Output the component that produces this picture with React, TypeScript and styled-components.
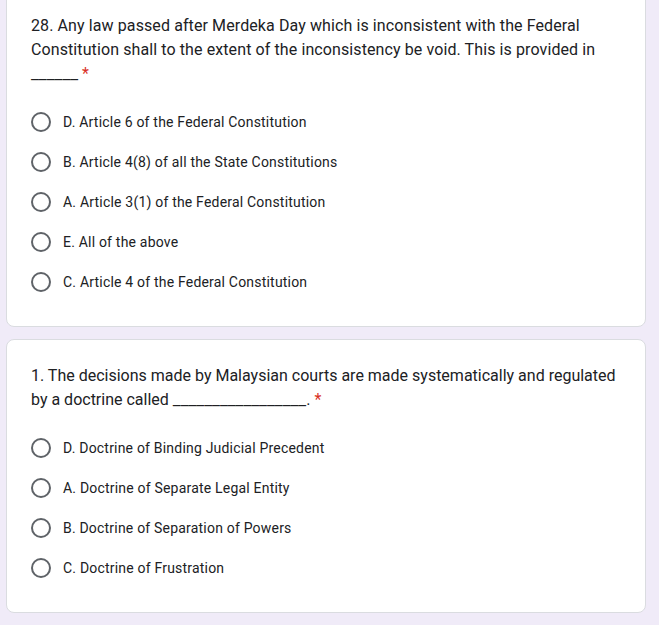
import React from 'react';
import styled, { createGlobalStyle } from 'styled-components';

const GlobalStyle = createGlobalStyle`
	html, body {
		margin: 0;
		padding: 0;
		background: #f0ebf8;
	}
`;

type Question = {
	title: string;
	blank: number;
	tail: string;
	spacing: number;
	options: string[];
};

const questions: Question[] = [
	{
		title:
			'28. Any law passed after Merdeka Day which is inconsistent with the Federal Constitution shall to the extent of the inconsistency be void. This is provided in ',
		blank: 6,
		tail: '',
		spacing: 0.1,
		options: [
			'D. Article 6 of the Federal Constitution',
			'B. Article 4(8) of all the State Constitutions',
			'A. Article 3(1) of the Federal Constitution',
			'E. All of the above',
			'C. Article 4 of the Federal Constitution',
		],
	},
	{
		title:
			'1. The decisions made by Malaysian courts are made systematically and regulated by a doctrine called ',
		blank: 17,
		tail: '.',
		spacing: 0,
		options: [
			'D. Doctrine of Binding Judicial Precedent',
			'A. Doctrine of Separate Legal Entity',
			'B. Doctrine of Separation of Powers',
			'C. Doctrine of Frustration',
		],
	},
];

const Page = styled.div`
	display: flex;
	flex-direction: column;
	gap: 12px;
	margin-top: -11px;
	padding: 0 13px 0 6px;
	min-height: 100vh;
	background: #f0ebf8;
`;

const Card = styled.div`
	background: #fff;
	border: 1px solid #dadce0;
	border-radius: 8px;
	padding: 24px;
`;

const Title = styled.div<{ $spacing: number }>`
	font-family: Roboto, Arial, sans-serif;
	font-size: 16px;
	line-height: 24px;
	color: #202124;
	letter-spacing: ${p => p.$spacing}px;
	margin-bottom: 16px;
`;

// the blank is a run of underscores, a touch wider than Roboto's own
const Blank = styled.span`
	font-size: 17.4px;
	line-height: 0;
	letter-spacing: 0;
`;

const Required = styled.span`
	color: #d93025;
	padding-left: 0.25em;
`;

const Options = styled.div`
	display: flex;
	flex-direction: column;
`;

const Option = styled.label`
	display: flex;
	align-items: center;
	height: 40px;
	gap: 12px;
	cursor: pointer;
	font-family: Roboto, Arial, sans-serif;
	font-size: 14px;
	letter-spacing: 0.2px;
	color: #202124;
`;

const Radio = styled.span`
	box-sizing: border-box;
	width: 20px;
	height: 20px;
	border-radius: 50%;
	border: 2px solid #5f6368;
	flex-shrink: 0;
`;

export default function App() {
	return (
		<>
			<GlobalStyle />
			<Page>
				{questions.map(q => (
					<Card key={q.title}>
						<Title $spacing={q.spacing}>
							{q.title}
							<Blank>{'_'.repeat(q.blank)}</Blank>
							{q.tail}
							<Required>*</Required>
						</Title>
						<Options>
							{q.options.map(opt => (
								<Option key={opt}>
									<Radio />
									<span>{opt}</span>
								</Option>
							))}
						</Options>
					</Card>
				))}
			</Page>
		</>
	);
}
